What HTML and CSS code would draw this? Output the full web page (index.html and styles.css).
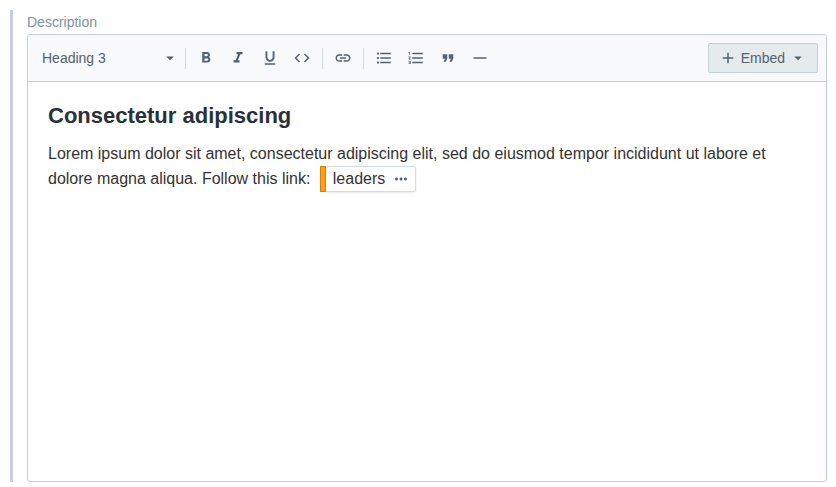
FILE: index.html
```html
<!DOCTYPE html>
<html lang="en">
<head>
<meta charset="utf-8">
<title>Description</title>
<link rel="stylesheet" href="styles.css">
</head>
<body>
<main class="field">
  <label class="field-label" for="editor">Description</label>
  <div class="editor">
    <div class="toolbar">
      <div class="style-picker">
        <select class="style-select" aria-label="Text style">
          <option>Heading 3</option>
        </select>
        <svg class="icon caret" viewBox="0 0 24 24"><path d="M7 10l5 5 5-5z"/></svg>
      </div>
      <span class="divider"></span>
      <button class="tool" type="button" aria-label="Bold"><svg class="icon" viewBox="0 0 24 24"><path d="M15.6 10.79c.97-.67 1.65-1.77 1.65-2.79 0-2.26-1.75-4-4-4H7v14h7.04c2.09 0 3.71-1.7 3.71-3.79 0-1.52-.86-2.82-2.15-3.42zM10 6.5h3c.83 0 1.5.67 1.5 1.5s-.67 1.5-1.5 1.5h-3v-3zm3.5 9H10v-3h3.5c.83 0 1.5.67 1.5 1.5s-.67 1.5-1.5 1.5z"/></svg></button>
      <button class="tool" type="button" aria-label="Italic"><svg class="icon" viewBox="0 0 24 24"><path d="M10 4v3h2.21l-3.42 8H6v3h8v-3h-2.21l3.42-8H18V4z"/></svg></button>
      <button class="tool" type="button" aria-label="Underline"><svg class="icon" viewBox="0 0 24 24"><path d="M12 17c3.31 0 6-2.69 6-6V3h-2.5v8c0 1.93-1.57 3.5-3.5 3.5S8.5 12.93 8.5 11V3H6v8c0 3.31 2.69 6 6 6zm-7 2v2h14v-2H5z"/></svg></button>
      <button class="tool" type="button" aria-label="Code"><svg class="icon" viewBox="0 0 24 24"><path d="M9.4 16.6L4.8 12l4.6-4.6L8 6l-6 6 6 6 1.4-1.4zm5.2 0l4.6-4.6-4.6-4.6L16 6l6 6-6 6-1.4-1.4z"/></svg></button>
      <span class="divider"></span>
      <button class="tool" type="button" aria-label="Link"><svg class="icon" viewBox="0 0 24 24"><path d="M3.9 12c0-1.71 1.39-3.1 3.1-3.1h4V7H7c-2.76 0-5 2.24-5 5s2.24 5 5 5h4v-1.9H7c-1.71 0-3.1-1.39-3.1-3.1zM8 13h8v-2H8v2zm9-6h-4v1.9h4c1.71 0 3.1 1.39 3.1 3.1s-1.39 3.1-3.1 3.1h-4V17h4c2.76 0 5-2.24 5-5s-2.24-5-5-5z"/></svg></button>
      <span class="divider"></span>
      <button class="tool" type="button" aria-label="Bulleted list"><svg class="icon" viewBox="0 0 24 24"><path d="M4 10.5c-.83 0-1.5.67-1.5 1.5s.67 1.5 1.5 1.5 1.5-.67 1.5-1.5-.67-1.5-1.5-1.5zm0-6c-.83 0-1.5.67-1.5 1.5S3.17 7.5 4 7.5 5.5 6.83 5.5 6 4.83 4.5 4 4.5zm0 12c-.83 0-1.5.68-1.5 1.5s.68 1.5 1.5 1.5 1.5-.68 1.5-1.5-.67-1.5-1.5-1.5zM7 19h14v-2H7v2zm0-6h14v-2H7v2zm0-8v2h14V5H7z"/></svg></button>
      <button class="tool" type="button" aria-label="Numbered list"><svg class="icon" viewBox="0 0 24 24"><path d="M2 17h2v.5H3v1h1v.5H2v1h3v-4H2v1zm1-9h1V4H2v1h1v3zm-1 3h1.8L2 13.1v.9h3v-1H3.2L5 10.9V10H2v1zm5-6v2h14V5H7zm0 14h14v-2H7v2zm0-6h14v-2H7v2z"/></svg></button>
      <button class="tool" type="button" aria-label="Quote"><svg class="icon" viewBox="0 0 24 24"><path d="M6 17h3l2-4V7H5v6h3zm8 0h3l2-4V7h-6v6h3z"/></svg></button>
      <button class="tool" type="button" aria-label="Horizontal rule"><svg class="icon" viewBox="0 0 24 24"><path d="M3.500 11h17v2h-17z"/></svg></button>
      <button class="embed" type="button">
        <svg class="icon" viewBox="0 0 24 24"><path d="M19 13h-6v6h-2v-6H5v-2h6V5h2v6h6v2z"/></svg>
        <span>Embed</span>
        <svg class="icon" viewBox="0 0 24 24"><path d="M7 10l5 5 5-5z"/></svg>
      </button>
    </div>
    <div class="content" id="editor" contenteditable="true" role="textbox" aria-label="Description" spellcheck="false">
      <h3>Consectetur adipiscing</h3>
      <p>Lorem ipsum dolor sit amet, consectetur adipiscing elit, sed do eiusmod tempor incididunt ut labore et dolore magna aliqua. Follow this link: <span class="entry" contenteditable="false"><span class="entry-name">leaders</span><button class="entry-menu" type="button" aria-label="Actions"><svg class="icon" viewBox="0 0 24 24"><path d="M6 10c-1.1 0-2 .9-2 2s.9 2 2 2 2-.9 2-2-.9-2-2-2zm12 0c-1.1 0-2 .9-2 2s.9 2 2 2 2-.9 2-2-.9-2-2-2zm-6 0c-1.1 0-2 .9-2 2s.9 2 2 2 2-.9 2-2-.9-2-2-2z"/></svg></button></span></p>
    </div>
  </div>
</main>
</body>
</html>
```
FILE: styles.css
```css
*,
*::before {
  box-sizing: border-box;
}

body {
  margin: 0;
  padding: 10px 9px 5px 10px;
  background: #fff;
  color: #333;
  font-family: "Liberation Sans", Arial, sans-serif;
}

.field {
  display: flex;
  flex-direction: column;
  min-height: calc(100vh - 15px);
  padding-left: 14px;
  border-left: 3px solid #c3d0d6;
}

.field-label {
  color: #8091a5;
  font-size: 14px;
  line-height: 24px;
}

.editor {
  display: flex;
  flex: 1;
  flex-direction: column;
  border: 1px solid #c3d0d6;
  border-radius: 3px;
}

.toolbar {
  display: flex;
  align-items: center;
  padding: 8px;
  border-bottom: 1px solid #c3cfd5;
  border-radius: 2px 2px 0 0;
  background: #f7f9fa;
}

button,
select {
  margin: 0;
  border: 0;
  background: transparent;
  color: #536171;
  font: inherit;
  font-size: 14px;
}

.icon {
  display: block;
  flex: none;
  width: 18px;
  height: 18px;
  fill: #536171;
}

.style-picker {
  position: relative;
  width: 145px;
}

.style-select {
  width: 100%;
  height: 30px;
  padding: 0 24px 0 6px;
  appearance: none;
}

.caret {
  position: absolute;
  top: 6px;
  right: 2px;
  pointer-events: none;
}

.divider {
  width: 1px;
  height: 21px;
  margin: 0 4px;
  background: #d3dce0;
}

.tool {
  display: flex;
  align-items: center;
  justify-content: center;
  width: 32px;
  height: 30px;
  padding: 0;
}

.embed {
  display: flex;
  align-items: center;
  gap: 4px;
  height: 30px;
  margin-left: auto;
  padding: 0 10px;
  border: 1px solid #c3d0d6;
  border-radius: 2px;
  background: #e5ebed;
}

.content {
  flex: 1;
  padding: 20px;
  outline: 0;
}

h3 {
  margin: 0 0 11px;
  color: #2a3039;
  font-size: 22px;
  line-height: 28px;
}

p {
  margin: 0;
  font-size: 16px;
  line-height: 25px;
}

.entry {
  position: relative;
  display: inline-flex;
  align-items: center;
  height: 26px;
  margin: 0 5px;
  padding: 0 5px 0 6px;
  border: 1px solid #d3dce0;
  border-left: 0;
  border-radius: 0 2px 2px 0;
  box-shadow: 0 1px 3px rgba(0, 0, 0, 0.08);
  line-height: 24px;
}

/* Content type stripe along the chip's left edge */
.entry::before {
  position: absolute;
  top: -1px;
  bottom: -1px;
  left: 0;
  width: 6px;
  border: 1px solid #d88000;
  background: #ff9e1a;
  content: "";
}

.entry-name {
  padding: 0 7px;
}

.entry-menu {
  padding: 0;
}
```
